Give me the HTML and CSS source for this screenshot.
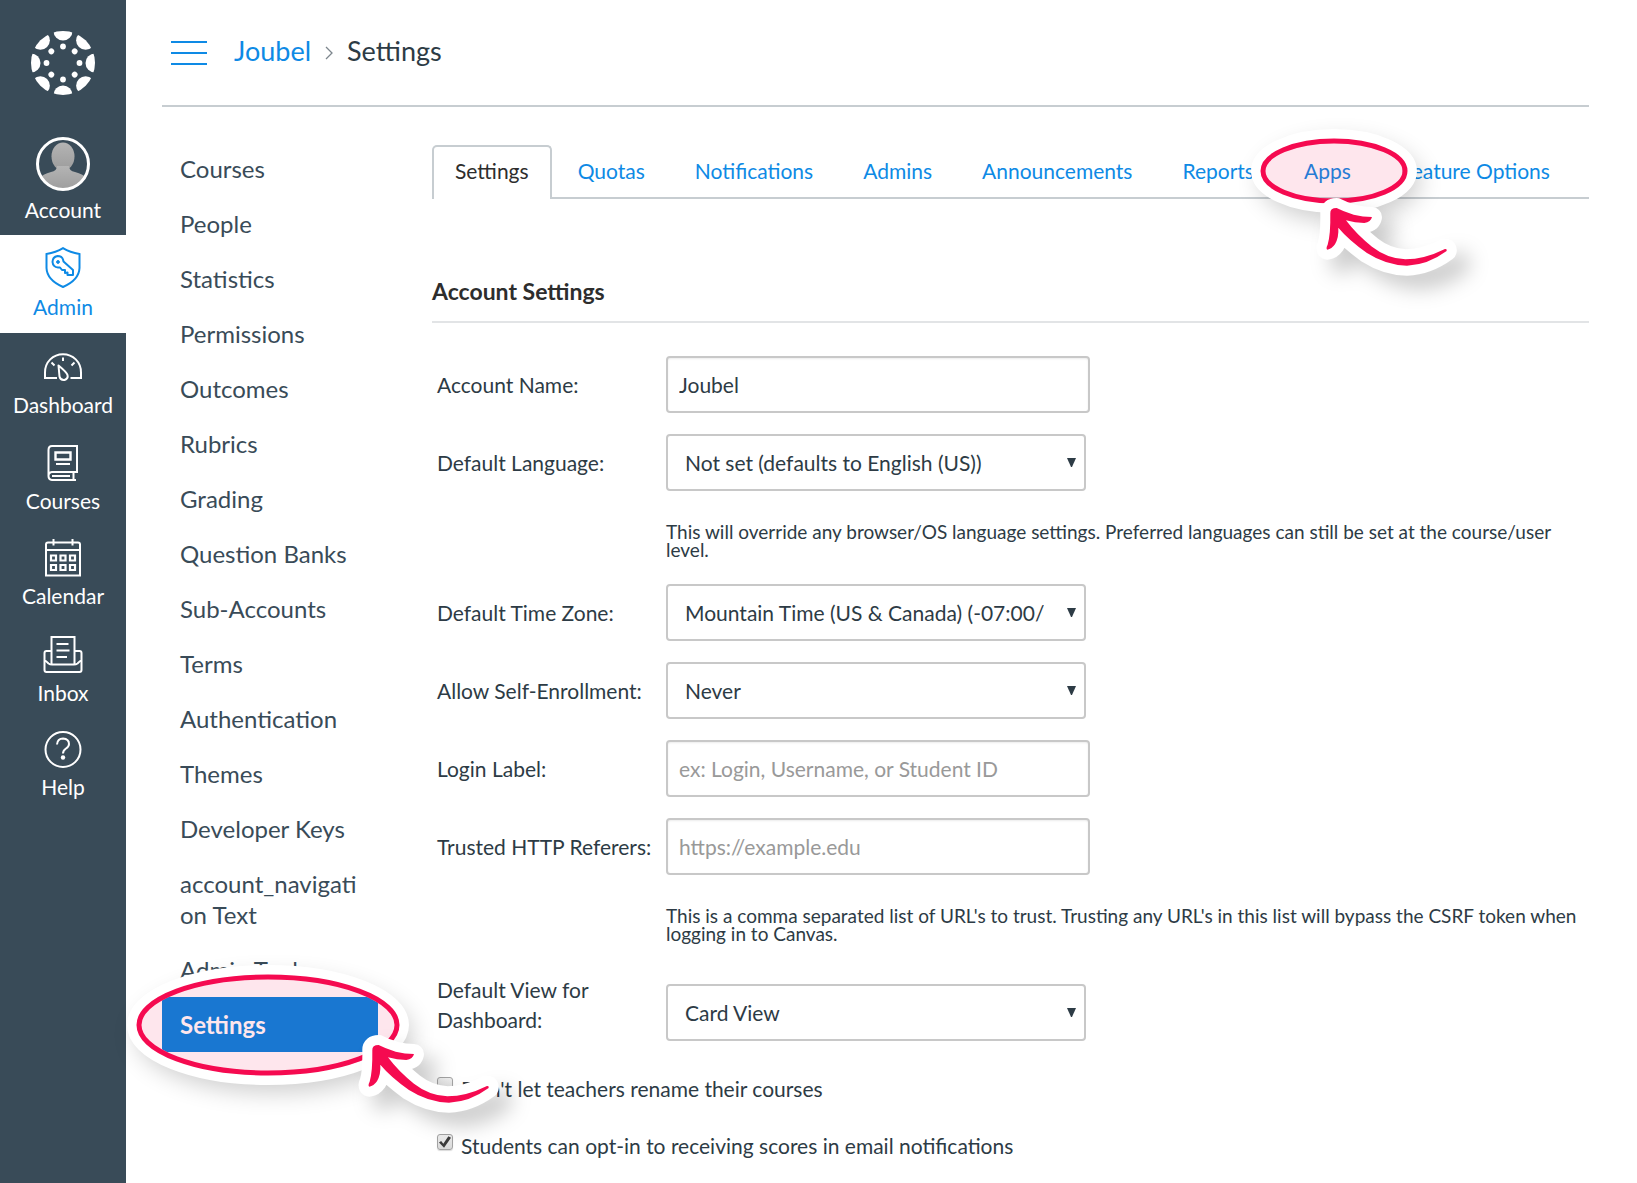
FILE: index.html
```html
<!DOCTYPE html>
<html lang="en">
<head>
<meta charset="utf-8">
<title>Settings</title>
<link rel="stylesheet" href="styles.css">
</head>
<body>
<svg class="defs" aria-hidden="true">
  <defs>
    <path id="arrow" d="M520 337Q519 321 539 321Q560 332 590 341Q618 348 645 348Q642 363 622 366Q594 366 567 358Q600 402 645 437Q690 472 745 475Q802 475 864 444Q871 443 869 450Q812 492 750 494Q688 493 630 456Q575 417 544 380Q546 408 534 430Q524 444 511 446Q506 443 512 431Q521 402 520 337Z"/>
    <linearGradient id="skin" x1="0" y1="0" x2="0" y2="1"><stop offset="0" stop-color="#b4b4b4"/><stop offset="1" stop-color="#9c9c9c"/></linearGradient>
    <filter id="soft" x="-50%" y="-100%" width="200%" height="300%"><feGaussianBlur stdDeviation="12"/></filter>
  </defs>
</svg>
<div class="app">
  <nav class="rail" aria-label="Global">
    <a class="logo" href="#" aria-label="Canvas">
      <svg width="64" height="64" viewBox="-32 -32 64 64" fill="#fff">
        <clipPath id="disc"><circle r="32"/></clipPath>
        <g clip-path="url(#disc)">
          <g id="petals"><circle cy="-32" r="9.5"/><circle cy="32" r="9.5"/><circle cx="-32" r="9.5"/><circle cx="32" r="9.5"/></g>
          <use href="#petals" transform="rotate(45)"/>
        </g>
        <g id="dots"><circle cy="-16.5" r="2.9"/><circle cy="16.5" r="2.9"/><circle cx="-16.5" r="2.9"/><circle cx="16.5" r="2.9"/></g>
        <use href="#dots" transform="rotate(45)"/>
      </svg>
    </a>
    <a class="rail-item account" href="#">
      <svg width="54" height="54" viewBox="-27 -27 54 54">
        <clipPath id="face"><circle r="25"/></clipPath>
        <g clip-path="url(#face)" fill="url(#skin)"><ellipse cy="-7.500" rx="11.500" ry="14"/><path d="M-6 2H6Q6 7 12 8Q20 10 25 15V27H-25V15Q-20 10-12 8Q-6 7-6 2Z"/></g>
        <circle r="25.500" fill="none" stroke="#fff" stroke-width="3"/>
      </svg>
      <span>Account</span>
    </a>
    <a class="rail-item active" href="#">
      <svg width="36" height="41" viewBox="0 0 36 41" fill="none" stroke="currentColor" stroke-width="2">
        <path d="M18 1.200Q25 5.500 34.500 7V21Q34 33 18 40Q2 33 1.500 21V7Q11 5.500 18 1.200Z"/>
        <path d="M18 12.500Q17 9 12.500 9Q7.500 10 7.500 15Q8 20 13 20.500L15 20.500L17 23H20V26L22.500 25.500V28H28V23L18.500 14.500Z" stroke-linejoin="round"/><circle cx="13" cy="15" r="1.400" fill="currentColor" stroke-width="1"/>
      </svg>
      <span>Admin</span>
    </a>
    <a class="rail-item" href="#">
      <svg width="40" height="41" viewBox="0 0 40 41" fill="none" stroke="currentColor" stroke-width="2">
        <path d="M14 33H2V27.500C2 17 10 9.200 20 9.200S38 17 38 27.500V33H27.500M20 12.500V16M8.500 17.500L11.500 20.500M31.500 17.500L28.500 20.500"/>
        <path d="M15.500 20.500L16.500 31.500Q17.500 35.500 21.500 35Q25.500 33.500 24.500 30Q23.500 27 15.500 20.500Z" stroke-linejoin="round"/>
      </svg>
      <span>Dashboard</span>
    </a>
    <a class="rail-item" href="#">
      <svg width="32" height="39" viewBox="0 0 32 39" fill="none" stroke="currentColor" stroke-width="2">
        <path d="M5 3H30V29H5Q1.500 29.500 1.500 33T5 37H29M26.500 29V37M1.500 33V7Q1.500 3 5 3M5 33H23" /><path d="M8.500 9.500H23.500V16.500H8.500Z" stroke-width="2.400"/><path d="M9 21H23"/>
      </svg>
      <span>Courses</span>
    </a>
    <a class="rail-item" href="#">
      <svg width="36" height="38" viewBox="0 0 36 38" fill="none" stroke="currentColor" stroke-width="2">
        <path d="M1 36.500V5.500Q1 3.500 3 3.500H33Q35 3.500 35 5.500V36.500ZM1 11H35M8.500 0V6.500M27.500 0V6.500"/>
        <path d="M6 16.500H11V21.500H6ZM15.500 16.500H20.500V21.500H15.500ZM25 16.500H30V21.500H25ZM6 26H11V31H6ZM15.500 26H20.500V31H15.500ZM25 26H30V31H25Z" stroke-width="2.200"/>
      </svg>
      <span>Calendar</span>
    </a>
    <a class="rail-item" href="#">
      <svg width="40" height="40" viewBox="0 0 40 40" fill="none" stroke="currentColor" stroke-width="2">
        <path d="M8.500 30V3H31.500V30M8.500 17H3.500Q1.500 17 1.500 19V36Q1.500 38 3.500 38H36.500Q38.500 38 38.500 36V19Q38.500 17 36.500 17H31.500M1.500 26Q3 27 5.500 29.500Q7 30.500 9 30.500H31Q33 30.500 34.500 29.500Q37 27 38.500 26M13.500 10H25.500M13.500 16.500H26.500M13.500 23H24"/>
      </svg>
      <span>Inbox</span>
    </a>
    <a class="rail-item" href="#">
      <svg width="38" height="37" viewBox="0 0 38 37" fill="none" stroke="currentColor" stroke-width="2">
        <circle cx="19" cy="18.500" r="17.500"/><path d="M13 13.500Q13.500 7.500 19 7.500Q25 8 25 13Q25 15.500 22 17.500Q19 19.500 19 22.500"/><circle cx="19" cy="26.500" r="2.200" fill="currentColor" stroke="none"/>
      </svg>
      <span>Help</span>
    </a>
  </nav>

  <div class="page">
    <header class="crumbs">
      <button class="menu" type="button" aria-label="Toggle navigation"><i></i><i></i><i></i></button>
      <a href="#">Joubel</a>
      <svg class="sep" width="8" height="14" viewBox="0 0 8 14" fill="none" stroke="#7d868d" stroke-width="1.300"><path d="M1 1L7 7L1 13"/></svg>
      <span>Settings</span>
    </header>

    <div class="columns">
      <nav class="side" aria-label="Account">
        <a href="#">Courses</a>
        <a href="#">People</a>
        <a href="#">Statistics</a>
        <a href="#">Permissions</a>
        <a href="#">Outcomes</a>
        <a href="#">Rubrics</a>
        <a href="#">Grading</a>
        <a href="#">Question Banks</a>
        <a href="#">Sub-Accounts</a>
        <a href="#">Terms</a>
        <a href="#">Authentication</a>
        <a href="#">Themes</a>
        <a href="#">Developer Keys</a>
        <a href="#">account_navigation Text</a>
        <a href="#">Admin Tools</a>
        <a class="current" href="#">Settings
          <svg class="mark mark-side" width="420" height="200" viewBox="0 0 420 200" aria-hidden="true">
            <mask id="m1" maskUnits="userSpaceOnUse" x="-80" y="-80" width="580" height="360"><rect x="-80" y="-80" width="580" height="360" fill="#fff"/><ellipse cx="168" cy="68" rx="130" ry="48" fill="#000"/></mask>
            <g mask="url(#m1)"><ellipse cx="174" cy="78" rx="138" ry="57" fill="#000" opacity=".2" filter="url(#soft)"/></g>
            <ellipse cx="168" cy="68" rx="134" ry="53" fill="none" stroke="#fff" stroke-width="14"/>
            <ellipse cx="168" cy="68" rx="129" ry="48" fill="#f50a50" fill-opacity=".1" stroke="#f50a50" stroke-width="5"/>
            <g class="arrow" transform="translate(99 -19) scale(.3333)"><use href="#arrow" stroke="#fff" stroke-width="60"/><use href="#arrow"/></g>
          </svg>
        </a>
      </nav>

      <main class="content">
        <nav class="tabs" aria-label="Settings sections">
          <a class="on" href="#">Settings</a>
          <a href="#">Quotas</a>
          <a href="#">Notifications</a>
          <a href="#">Admins</a>
          <a href="#">Announcements</a>
          <a href="#">Reports</a>
          <a class="apps" href="#">Apps
            <svg class="mark mark-apps" width="280" height="220" viewBox="0 0 280 220" aria-hidden="true">
              <mask id="m2" maskUnits="userSpaceOnUse" x="-80" y="-80" width="440" height="380"><rect x="-80" y="-80" width="440" height="380" fill="#fff"/><ellipse cx="114" cy="70" rx="72" ry="31" fill="#000"/></mask>
              <g mask="url(#m2)"><ellipse cx="120" cy="80" rx="80" ry="40" fill="#000" opacity=".2" filter="url(#soft)"/></g>
              <ellipse cx="114" cy="70" rx="76" ry="35" fill="none" stroke="#fff" stroke-width="14"/>
              <ellipse cx="114" cy="70" rx="71" ry="30" fill="#f50a50" fill-opacity=".1" stroke="#f50a50" stroke-width="5"/>
              <g class="arrow" transform="translate(-63 0) scale(.3333)"><use href="#arrow" stroke="#fff" stroke-width="60"/><use href="#arrow"/></g>
            </svg>
          </a>
          <a href="#">Feature Options</a>
        </nav>

        <h2>Account Settings</h2>
        <form class="form">
          <label for="name">Account Name:</label>
          <input id="name" type="text" value="Joubel">
          <label for="lang">Default Language:</label>
          <select id="lang"><option>Not set (defaults to English (US))</option></select>
          <p>This will override any browser/OS language settings. Preferred languages can still be set at the course/user level.</p>
          <label for="zone">Default Time Zone:</label>
          <select id="zone"><option>Mountain Time (US &amp; Canada) (-07:00/-06:00)</option></select>
          <label for="enroll">Allow Self-Enrollment:</label>
          <select id="enroll"><option>Never</option></select>
          <label for="login">Login Label:</label>
          <input id="login" type="text" placeholder="ex: Login, Username, or Student ID">
          <label for="ref">Trusted HTTP Referers:</label>
          <input id="ref" type="text" placeholder="https://example.edu">
          <p>This is a comma separated list of URL's to trust. Trusting any URL's in this list will bypass the CSRF token when logging in to Canvas.</p>
          <label class="two" for="view">Default View for Dashboard:</label>
          <select class="view" id="view"><option>Card View</option></select>
          <div class="check"><input id="rename" type="checkbox"><label for="rename">Don't let teachers rename their courses</label></div>
          <div class="check"><input id="scores" type="checkbox" checked><label for="scores">Students can opt-in to receiving scores in email notifications</label></div>
        </form>
      </main>
    </div>
  </div>
</div>
</body>
</html>
```
FILE: styles.css
```css
* { box-sizing: border-box; }
body {
  margin: 0;
  background: #fff;
  color: #2d3b45;
  font: 21px/30px Lato, Carlito, sans-serif;
}
a { color: #0e8ae5; text-decoration: none; }
.defs { position: absolute; width: 0; height: 0; }

.app { display: flex; min-height: 100vh; }

/* dark global navigation */
.rail {
  flex: 0 0 126px;
  display: flex;
  flex-direction: column;
  background: #394b58;
}
.logo { display: flex; justify-content: center; padding: 31px 0; }
.logo svg { display: block; }
.rail-item {
  display: flex;
  flex-direction: column;
  align-items: center;
  padding: 12px 0 11px;
  color: #fff;
}
.rail-item svg { display: block; flex: none; }
.rail-item span { margin-top: 4px; }
.rail-item.account { padding: 11px 0 10px; }
.rail-item.active { background: #fff; color: #0e8ae5; }

.page { flex: 1; min-width: 0; padding: 0 48px 0 36px; }

.crumbs {
  display: flex;
  align-items: center;
  height: 107px;
  padding: 0 0 4px 9px;
  border-bottom: 2px solid #c7cdd1;
  font-size: 27px;
}
.menu {
  display: flex;
  flex-direction: column;
  gap: 9px;
  width: 36px;
  margin-right: 27px;
  padding: 5px 0 0;
  border: 0;
  background: none;
}
.menu i { height: 2px; background: #0e8ae5; }
.sep { margin: 4px 14px 0; }

.columns { display: flex; gap: 54px; }

/* account navigation */
.side { flex: 0 0 216px; padding-top: 34px; font-size: 24px; line-height: 31px; }
.side a {
  position: relative;
  display: block;
  padding: 12px 18px;
  color: #394b58;
  overflow-wrap: anywhere;
}
.side .current { background: #0084e0; color: #fff; font-weight: 700; }

/* highlight rings with an arrow */
.mark { position: absolute; z-index: 2; overflow: visible; pointer-events: none; }
.mark-side { left: -62px; top: -40px; }
.mark-apps { left: -62px; top: -44px; }
.arrow {
  fill: #f50a50;
  stroke-linejoin: round;
  filter: drop-shadow(40px 40px 30px rgba(0, 0, 0, .2));
}

.content { flex: 1; min-width: 0; padding-top: 38px; }
.tabs {
  display: flex;
  height: 54px;
  box-shadow: inset 0 -2px #c7cdd1;
}
.tabs a {
  position: relative;
  padding: 11px 22px;
  margin-right: 6px;
  white-space: nowrap;
}
.tabs .on {
  margin-right: 4px;
  border: 2px solid #c7cdd1;
  border-bottom: 0;
  border-radius: 5px 5px 0 0;
  padding: 9px 21px;
  background: #fff;
  color: #2d2d2d;
}
h2 {
  margin: 77px 0 0;
  padding-bottom: 15px;
  border-bottom: 2px solid #e2e4e6;
  color: #2d2d2d;
  font-size: 23px;
  line-height: 30px;
}

.form {
  display: grid;
  grid-template-columns: 229px 1fr;
  padding: 33px 0 0 5px;
  row-gap: 21px;
}
.form > label { align-self: center; }
.form input[type="text"], .form select {
  width: 424px;
  height: 57px;
  padding: 0 11px;
  border: 2px solid #c8c8c8;
  border-radius: 4px;
  background: #fff;
  color: #2d3b45;
  font: inherit;
}
.form input[type="text"] { box-shadow: inset 0 1px 2px rgba(0, 0, 0, .08); }
.form input::placeholder { color: #999; opacity: 1; }
.form select {
  appearance: none;
  width: 420px;
  padding: 0 40px 0 17px;
  background: url("data:image/svg+xml,%3Csvg xmlns='http://www.w3.org/2000/svg' width='9' height='9'%3E%3Cpath d='M0 0H9L5 9H4Z' fill='%232d3b45'/%3E%3C/svg%3E") no-repeat right 8px center;
}
.form p {
  grid-column: 2;
  margin: 11px 0 4px;
  font-size: 19px;
  line-height: 18px;
}
.form .two { width: 180px; }
.form .view { margin-top: 16px; }
.check { grid-column: 1 / -1; display: flex; gap: 8px; padding-top: 12px; }
.check + .check { padding-top: 6px; }
.check input {
  appearance: none;
  width: 16px;
  height: 16px;
  margin: 3px 0 0;
  border: 1px solid #a3a3a3;
  border-radius: 3px;
  background: linear-gradient(#eee, #d9d9d9);
  box-shadow: 0 1px 1px rgba(0, 0, 0, .15);
}
.check input:checked::before {
  content: "";
  display: block;
  width: 12px;
  height: 12px;
  margin: 1px;
  background: #3b3b3b;
  clip-path: polygon(0 55%, 18% 42%, 36% 64%, 78% 2%, 100% 14%, 42% 98%);
}
```
